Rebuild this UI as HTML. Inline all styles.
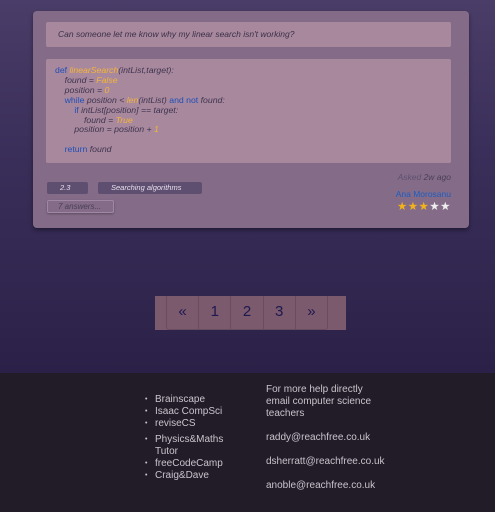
<!DOCTYPE html>
<html><head><meta charset="utf-8"><style>
*{margin:0;padding:0;box-sizing:border-box}
body{width:495px;height:512px;overflow:hidden;font-family:"Liberation Sans",sans-serif;background:linear-gradient(#4a3d68,#3a2f5a 150px,#2b2148 370px);position:relative}
.card{position:absolute;left:33px;top:11px;width:436px;height:217px;background:#846c88;border-radius:4px;box-shadow:0 2px 4px rgba(0,0,0,.4)}
.q{position:absolute;left:13px;top:11px;width:405px;height:25px;background:#a8889d;border-radius:2px;font-size:8.5px;font-style:italic;color:#3a3048;padding:7px 12px}
.code{position:absolute;left:13px;top:48px;width:405px;height:104px;background:#a8889d;border-radius:2px;font-size:8.7px;font-style:italic;color:#3e3450;padding:7px 9px;line-height:9.9px;white-space:pre}
.k{color:#1d4fb8;font-style:normal}.y{color:#f4b53a}
.tag{position:absolute;top:171px;height:12px;background:#5e4e70;border-radius:2px;color:#e8e0ee;font-size:7.5px;font-style:italic;padding:1px 0 0 13px}
.ans{position:absolute;left:14px;top:189px;width:67px;height:13px;border:1px solid #a088a4;border-radius:2px;font-size:8px;font-style:italic;color:#4a3e58;padding:1px 0 0 10px;box-shadow:0 1px 2px rgba(0,0,0,.3)}
.meta{position:absolute;right:18px;top:161px;text-align:right;font-size:8.5px}
.pag{position:absolute;left:155px;top:296px;width:191px;height:34px;background:#7a5a6c}
.pag .in{position:absolute;left:11px;top:0;width:162px;height:34px;border:1px solid #6a4c60;border-top:none;border-radius:0 0 3px 3px;display:flex}
.pag .in div{flex:1;border-right:1px solid #6a4c60;text-align:center;color:#1e1850;font-size:15px;line-height:32px}
.pag .in div:last-child{border-right:none}
.foot{position:absolute;left:0;top:373px;width:495px;height:139px;background:#221c28;color:#c8c4cc;font-size:10px}
ul{position:absolute;left:155px;list-style:none;line-height:12px}
li:before{content:"•";position:absolute;left:-10px;font-size:7px}
.r{position:absolute;left:266px;top:11px;line-height:12px}
</style></head><body>
<div class="card">
<div class="q">Can someone let me know why my linear search isn't working?</div>
<div class="code"><span class="k">def</span> <span class="y">linearSearch</span>(intList,target):
    found = <span class="y">False</span>
    position = <span class="y">0</span>
    <span class="k">while</span> position &lt; <span class="y">len</span>(intList) <span class="k">and not</span> found:
        <span class="k">if</span> intList[position] == target:
            found = <span class="y">True</span>
        position = position + <span class="y">1</span>

    <span class="k">return</span> found</div>
<div class="tag" style="left:14px;width:41px">2.3</div>
<div class="tag" style="left:65px;width:104px">Searching algorithms</div>
<div class="ans">7 answers...</div>
<div class="meta"><div style="font-style:italic;color:#4a3e58"><span style="color:#5e5070">Asked</span> 2w ago</div>
<div style="color:#1d5cc0;margin-top:7px">Ana Morosanu</div>
<div style="font-size:11.5px;letter-spacing:0.5px;margin-top:0"><span style="color:#f4b21a">★★★</span><span style="color:#eee">★★</span></div></div>
</div>
<div class="pag"><div class="in"><div>«</div><div>1</div><div>2</div><div>3</div><div>»</div></div></div>
<div class="foot">
<ul style="top:21px"><li>Brainscape</li><li>Isaac CompSci</li><li>reviseCS</li></ul>
<ul style="top:61px"><li>Physics&amp;Maths<br>Tutor</li><li>freeCodeCamp</li><li>Craig&amp;Dave</li></ul>
<div class="r">For more help directly<br>email computer science<br>teachers<br><br>raddy@reachfree.co.uk<br><br>dsherratt@reachfree.co.uk<br><br>anoble@reachfree.co.uk</div>
</div>
</body></html>
